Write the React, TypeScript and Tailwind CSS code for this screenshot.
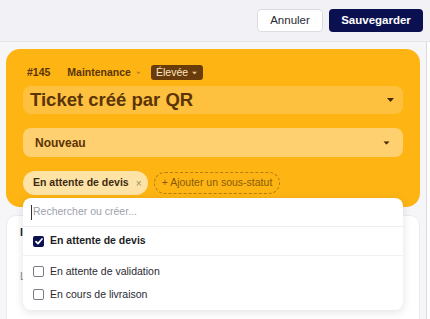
function Caret({ className }: { className?: string }) {
  return (
    <svg width="7" height="4" viewBox="0 0 7 4" className={className}>
      <path d="M0 0 H7 L3.5 4 Z" fill="currentColor" />
    </svg>
  )
}

function Box({ checked }: { checked?: boolean }) {
  if (checked) {
    return (
      <span className="flex h-[11px] w-[11px] items-center justify-center rounded-[2px] bg-[#0b1150]">
        <svg width="8" height="7" viewBox="0 0 8 7">
          <path d="M1 3.6 L3 5.6 L7 1" fill="none" stroke="white" strokeWidth="1.7" strokeLinecap="round" strokeLinejoin="round" />
        </svg>
      </span>
    )
  }
  return <span className="h-[11px] w-[11px] rounded-[2px] border border-[#7a7a84] bg-white" />
}

export default function App() {
  return (
    <div className="flex h-[319px] w-[430px] flex-col overflow-hidden bg-white font-['Liberation_Sans',Arial,sans-serif]">
      <header className="flex h-[42px] shrink-0 items-center justify-end gap-[6px] border-b border-[#e3e3e8] bg-[#f2f2f6] pr-[7px]">
        <button className="h-[23px] w-[66px] rounded-[4px] border border-[#dcdce2] bg-white text-[11.5px] text-[#2a2a33]">
          Annuler
        </button>
        <button className="h-[23px] w-[94px] rounded-[4px] bg-[#0b1150] text-[11.5px] font-bold text-white">
          Sauvegarder
        </button>
      </header>

      <div className="flex flex-1">
        <div className="w-[427px] border-r border-[#d9d9df] bg-[#f6f6f8] pl-[6px] pr-[6px] pt-[7px]">
          <section className="relative h-[158px] rounded-[14px] bg-[#feb514] px-[17px] pt-[16px] text-[#5b3406]">
            <div className="flex h-[15px] items-center pl-[4px] text-[10.5px] font-bold">
              <span>#145</span>
              <span className="ml-[17px] flex items-center gap-[4px]">
                Maintenance
                <Caret className="scale-75 text-[#c08a2a]" />
              </span>
              <span className="ml-[9px] flex h-[15px] items-center gap-[3px] rounded-[3px] bg-[#6a3c0b] px-[5px] text-[#fbe7c0]">
                <span className="font-normal">Élevée</span>
                <Caret className="scale-75 text-[#e9c58a]" />
              </span>
            </div>

            <div className="mt-[6px] flex h-[28px] items-center justify-between rounded-[8px] bg-[#fdc03f] pl-[7px] pr-[9px]">
              <span className="text-[18.5px] font-bold leading-none">Ticket créé par QR</span>
              <Caret className="text-[#4a2a04]" />
            </div>

            <div className="mt-[14px] flex h-[29px] items-center justify-between rounded-[8px] bg-[#fed070] pl-[12px] pr-[13px]">
              <span className="text-[12px] font-bold">Nouveau</span>
              <Caret className="scale-90 text-[#4a2a04]" />
            </div>

            <div className="mt-[14px] flex items-center gap-[6px]">
              <span className="flex h-[24px] w-[125px] items-center rounded-full bg-[#fde3a6] pl-[10px] text-[10.5px] font-bold text-[#3d2a12]">
                En attente de devis
                <span className="ml-[7px] text-[10px] font-normal text-[#a08a6a]">×</span>
              </span>
              <span className="flex h-[22px] w-[126px] items-center justify-center rounded-full border border-dashed border-[#b67c0c] text-[10.5px] text-[#8a5a06]">
                + Ajouter un sous-statut
              </span>
            </div>

            <div className="absolute left-[17px] top-[149px] z-10 h-[112px] w-[380px] rounded-[8px] bg-white shadow-[0_2px_10px_rgba(0,0,0,0.12)]">
              <div className="flex h-[29px] items-center border-b border-[#ececf0] pl-[8px]">
                <span className="h-[15px] w-px bg-[#333]" />
                <span className="ml-[1px] text-[10.5px] text-[#a0a0ab]">Rechercher ou créer...</span>
              </div>
              <div className="flex h-[29px] items-center gap-[6px] border-b border-[#f0f0f3] pl-[10px] text-[10.5px] font-bold text-[#1e1e26]">
                <Box checked />
                En attente de devis
              </div>
              <div className="pt-[4px] text-[10.5px] text-[#2a2a33]">
                <div className="flex h-[23px] items-center gap-[6px] pl-[10px]">
                  <Box />
                  En attente de validation
                </div>
                <div className="flex h-[23px] items-center gap-[6px] pl-[10px]">
                  <Box />
                  En cours de livraison
                </div>
              </div>
            </div>
          </section>

          <div className="mt-[8px] h-[120px] rounded-[10px] border border-[#ececf0] bg-white pl-[13px] pt-[9px] text-[10.5px]">
            <div className="w-[3px] overflow-hidden whitespace-nowrap font-bold text-[#222]">Informations</div>
            <div className="mt-[28px] w-[3px] overflow-hidden whitespace-nowrap text-[#888]">Lieu</div>
          </div>
        </div>
        <div className="flex-1 bg-white" />
      </div>
    </div>
  )
}
